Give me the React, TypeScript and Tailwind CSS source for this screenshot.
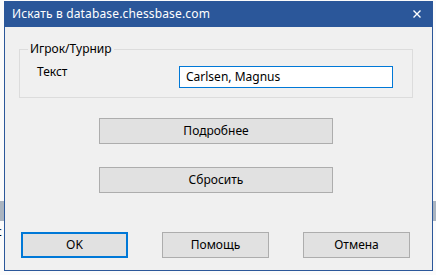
import React from "react";

const font = { fontFamily: '"Noto Sans", "Open Sans", sans-serif' };

function Btn({ label, className = "" }: { label: string; className?: string }) {
  return (
    <div
      className={`flex items-center justify-center bg-[#e1e1e1] border border-[#adadad] text-[12px] text-black ${className}`}
    >
      {label}
    </div>
  );
}

export default function App() {
  return (
    <div
      className="relative w-[436px] h-[275px] overflow-hidden bg-[#fbfbfb] font-['Noto_Sans',sans-serif]"
      style={font}
    >
      {/* desktop behind the dialog */}
      <div className="absolute left-0 top-[201px] w-[436px] h-[20px] bg-[#aab4c0]" />
      <div className="absolute left-[-4px] top-[224px] text-[12px] text-black leading-[16px]">c</div>

      {/* dialog window */}
      <div className="relative ml-[4px] mt-[1px] w-[429px] h-[270px] border border-[#2b579a] bg-[#f0f0f0] flex flex-col">
        {/* title bar */}
        <div className="h-[26px] -mx-px -mt-px bg-[#2b579a] flex items-center pl-[8px] pr-[12px] shrink-0">
          <span className="text-white text-[12px] leading-[16px] tracking-[0.15px]">Искать в database.chessbase.com</span>
          <svg className="ml-auto" width="8" height="8" viewBox="0 0 8 8">
            <path d="M0.5 0.5 L7.5 7.5 M7.5 0.5 L0.5 7.5" stroke="white" strokeWidth="1.4" />
          </svg>
        </div>

        {/* group box */}
        <div className="relative ml-[14px] mt-[22px] w-[394px] h-[49px] border border-[#dcdcdc] flex items-start">
          <span className="absolute left-[8px] top-[-9px] px-[2px] bg-[#f0f0f0] text-[12px] leading-[16px] text-black">
            Игрок/Турнир
          </span>
          <span className="ml-[17px] mt-[14px] w-[142px] text-[12px] leading-[16px] text-black">Текст</span>
          <div className="mt-[16px] w-[214px] h-[22px] border border-[#0078d7] bg-white flex items-center pl-[6px] text-[12px] text-black">
            Carlsen, Magnus
          </div>
        </div>

        <Btn label="Подробнее" className="ml-[94px] mt-[20px] w-[234px] h-[26px]" />
        <Btn label="Сбросить" className="ml-[94px] mt-[23px] w-[234px] h-[26px]" />

        <div className="flex ml-[16px] mt-[39px] gap-[34px]">
          <div className="flex items-center justify-center w-[107px] h-[26px] bg-[#e1e1e1] border-2 border-[#0078d7] text-[12px] text-black">
            OK
          </div>
          <Btn label="Помощь" className="w-[107px] h-[26px]" />
          <Btn label="Отмена" className="w-[107px] h-[26px]" />
        </div>
      </div>
    </div>
  );
}
